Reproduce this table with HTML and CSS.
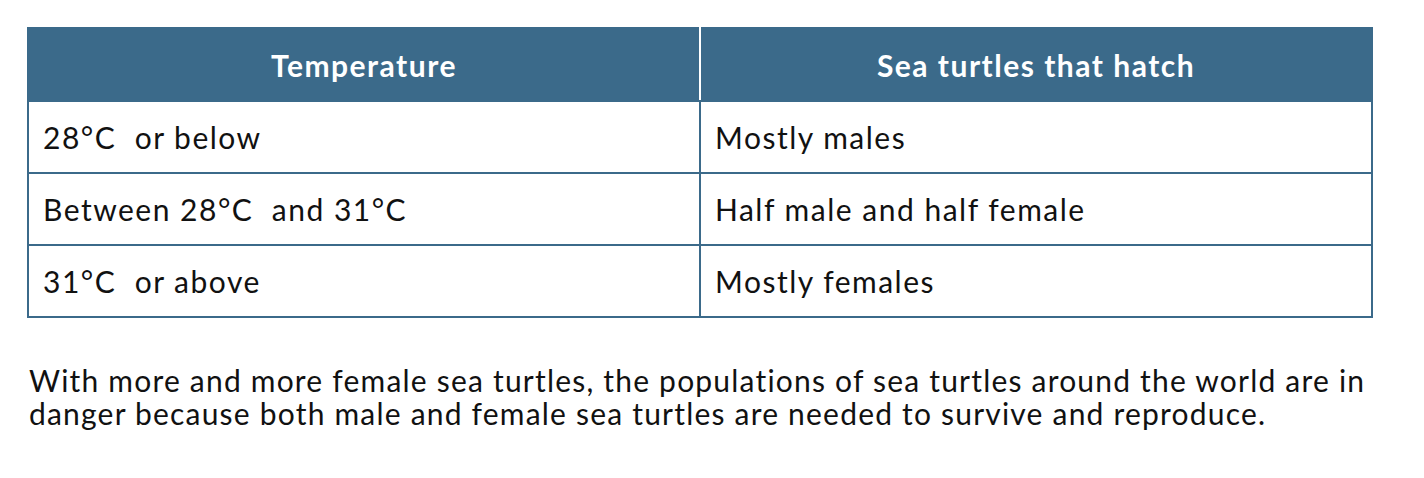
FILE: index.html
```html
<!DOCTYPE html>
<html>
<head>
<meta charset="utf-8">
<link rel="stylesheet" href="styles.css">
</head>
<body>
<div class="page">
<table class="temps">
<thead>
<tr><th>Temperature</th><th>Sea turtles that hatch</th></tr>
</thead>
<tbody>
<tr><td>28°C&nbsp; or below</td><td>Mostly males</td></tr>
<tr><td>Between 28°C&nbsp; and 31°C</td><td>Half male and half female</td></tr>
<tr><td>31°C&nbsp; or above</td><td>Mostly females</td></tr>
</tbody>
</table>
<p class="note">With more and more female sea turtles, the populations of sea turtles around the world are in danger because both male and female sea turtles are needed to survive and reproduce.</p>
</div>
</body>
</html>
```

FILE: styles.css
```css
html, body {
  margin: 0;
  padding: 0;
  background: #ffffff;
}
.page {
  padding: 27px 0 0 27px;
  width: 1346px;
  font-family: Lato, "Open Sans", sans-serif;
  color: #111111;
}
.temps {
  width: 1346px;
  border-collapse: collapse;
  table-layout: fixed;
}
.temps th {
  background: #3b6a8a;
  color: #ffffff;
  font-weight: 700;
  font-size: 30px;
  letter-spacing: 1.5px;
  height: 73px;
  padding: 0;
  text-align: center;
  border: 2px solid #3b6a8a;
  border-right: 2px solid #ffffff;
  box-sizing: border-box;
}
.temps th:last-child {
  border-right: 2px solid #3b6a8a;
}
.temps td {
  border: 2px solid #3b6a8a;
  height: 72px;
  padding: 0 0 0 14px;
  font-size: 30px;
  letter-spacing: 1.5px;
  box-sizing: border-box;
}
.note {
  margin: 46px 0 0 2px;
  width: 1346px;
  font-size: 30px;
  letter-spacing: 1.2px;
  line-height: 33px;
}
```
